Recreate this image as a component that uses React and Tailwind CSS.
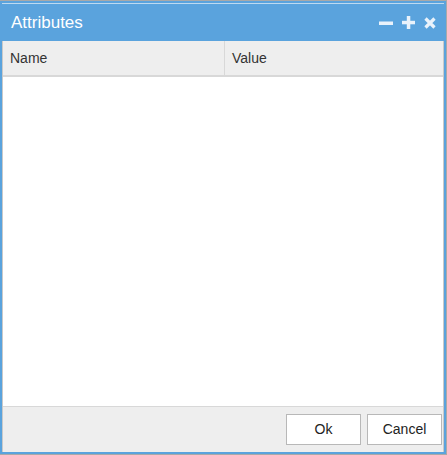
const App = () => {
    return (
        <div className="w-[447px] h-[455px] bg-white border-t border-r border-b border-[#a9a9a9] font-['Liberation_Sans',Arial,sans-serif]">
            <div className="w-full h-full flex flex-col border-2 border-[#5aa3dd]">
                <div className="h-[38px] bg-[#5aa3dd] flex items-center justify-between pl-[9px] pr-[8px] border-t border-white/60">
                    <span className="text-white text-[17px]">Attributes</span>
                    <div className="flex items-center gap-[9px] text-[#e9f2fb]">
                        <svg width="14" height="14" viewBox="0 0 14 14"><rect x="0" y="5.5" width="14" height="3.5" fill="currentColor" /></svg>
                        <svg width="13" height="13" viewBox="0 0 13 13"><rect x="0" y="4.8" width="13" height="3.5" fill="currentColor" /><rect x="4.8" y="0" width="3.5" height="13" fill="currentColor" /></svg>
                        <svg width="12" height="12" viewBox="0 0 12 12"><path d="M1.5 1.5 L10.5 10.5 M10.5 1.5 L1.5 10.5" stroke="currentColor" strokeWidth="3.2" /></svg>
                    </div>
                </div>
                <div className="flex-1 flex flex-col bg-white border-x border-[#c9c9c9]">
                    <div className="h-[36px] flex bg-[#eeeeee] border-b-2 border-[#d8d8d8] text-[14px] text-[#333]">
                        <div className="w-[222px] flex items-center pl-[7px] border-r border-[#d8d8d8]">Name</div>
                        <div className="flex-1 flex items-center pl-[7px]">Value</div>
                    </div>
                    <div className="flex-1"></div>
                    <div className="h-[46px] bg-[#eeeeee] border-t border-[#d8d8d8] flex items-center justify-end gap-[6px] pr-[1px]">
                        <button className="w-[75px] h-[31px] bg-white border border-[#b8b8b8] text-[14px] text-[#222]">Ok</button>
                        <button className="w-[75px] h-[31px] bg-white border border-[#b8b8b8] text-[14px] text-[#222]">Cancel</button>
                    </div>
                </div>
            </div>
        </div>
    );
};

export default App;
